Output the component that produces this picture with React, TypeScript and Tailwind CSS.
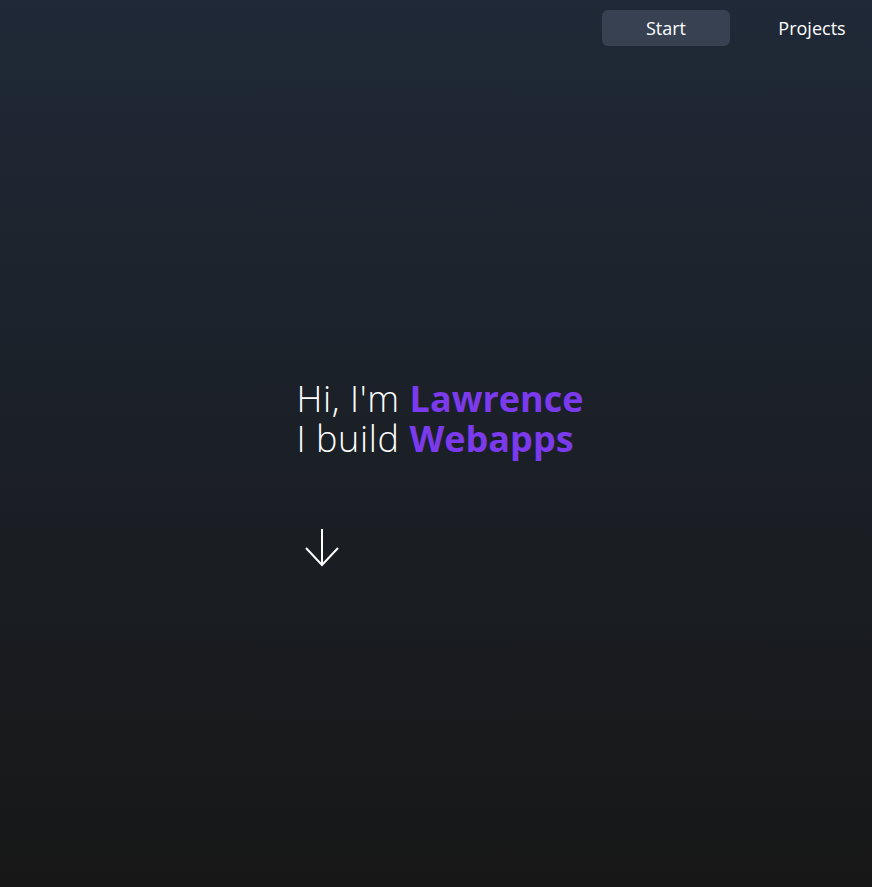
function NavButton({ label, active }: { label: string; active?: boolean }) {
  return (
    <button
      className={
        active
          ? "w-32 h-9 rounded-md bg-[#374151] text-white text-lg"
          : "w-[120px] h-9 rounded-md text-white text-lg"
      }
    >
      {label}
    </button>
  );
}

export default function App() {
  return (
    <div
      className="min-h-screen flex flex-col bg-linear-to-b from-[#1f2937] to-[#171717] text-white"
      style={{ fontFamily: '"Open Sans", "Noto Sans", sans-serif' }}
    >
      {/* nav */}
      <nav className="flex justify-end gap-[22px] pt-[10px]">
        <NavButton label="Start" active />
        <NavButton label="Projects" />
      </nav>

      {/* hero */}
      <main className="flex justify-center pt-[333px] pl-2">
        <div className="flex flex-col">
          <h1 className="text-4xl font-light">
            <span className="tracking-[0.017em]">Hi, I'm </span>
            <span className="font-bold text-[#7c3aed]">Lawrence</span>
          </h1>
          <h2 className="text-4xl font-light">
            <span className="tracking-[0.017em]">I build </span>
            <span className="font-bold text-[#7c3aed]">Webapps</span>
          </h2>
          <div className="mt-[69px] pl-[9px]">
            <svg width="34" height="39" viewBox="0 0 34 39" fill="none" stroke="white" strokeWidth="2">
              <path d="M17 1v36" />
              <path d="M1 20l16 17 16-17" />
            </svg>
          </div>
        </div>
      </main>
    </div>
  );
}
